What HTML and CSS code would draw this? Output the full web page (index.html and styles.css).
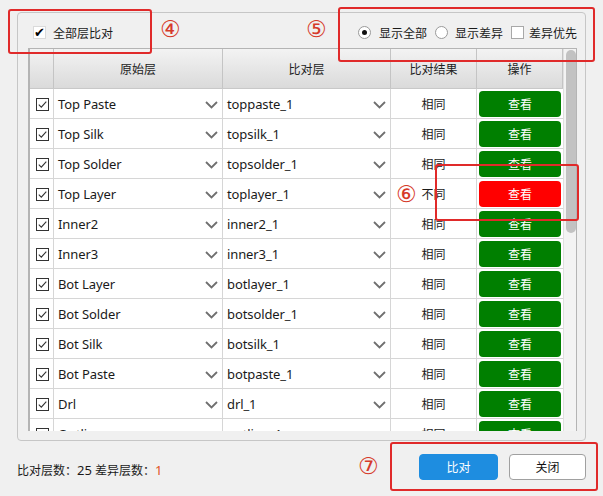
FILE: index.html
```html
<!DOCTYPE html>
<html>
<head>
<meta charset="utf-8">
<link rel="stylesheet" href="styles.css">
</head>
<body>
<div class="window">
  <div class="group">
    <div class="toolbar">
      <label class="chk-all"><span class="bigcheck">✔</span>全部层比对</label>
      <div class="filters">
        <span class="radio on"></span><span class="opt">显示全部</span>
        <span class="radio r2"></span><span class="opt o2">显示差异</span>
        <span class="box"></span><span class="opt">差异优先</span>
      </div>
    </div>
    <div class="table">
      <div class="grid">
        <div class="row head">
          <div class="c c0"></div>
          <div class="c c1">原始层</div>
          <div class="c c2">比对层</div>
          <div class="c c3">比对结果</div>
          <div class="c c4">操作</div>
        </div>
        <div class="rows" id="rows"></div>
      </div>
      <div class="scroll"><div class="thumb"></div></div>
    </div>
  </div>
  <div class="footer">
    <div class="stats">比对层数：<span class="lat">25</span> 差异层数：<span class="diff lat">1</span></div>
    <div class="actions">
      <button class="btn primary">比对</button>
      <button class="btn plain">关闭</button>
    </div>
  </div>

  <div class="mark m4"></div><span class="num n4">④</span>
  <div class="mark m5"></div><span class="num n5">⑤</span>
  <div class="mark m6"></div><span class="num n6">⑥</span>
  <div class="mark m7"></div><span class="num n7">⑦</span>
</div>
<script src="script.js"></script>
</body>
</html>
```
FILE: script.js
```js
const data = [
  ["Top Paste","toppaste_1",1],["Top Silk","topsilk_1",1],["Top Solder","topsolder_1",1],
  ["Top Layer","toplayer_1",0],["Inner2","inner2_1",1],["Inner3","inner3_1",1],
  ["Bot Layer","botlayer_1",1],["Bot Solder","botsolder_1",1],["Bot Silk","botsilk_1",1],
  ["Bot Paste","botpaste_1",1],["Drl","drl_1",1],["Outline","outline_1",1]
];
const chev = '<svg class="chev" width="13" height="8" viewBox="0 0 13 8"><path d="M1 1 L6.5 6.5 L12 1" fill="none" stroke="#6f6f6f" stroke-width="1.8"/></svg>';
const chk = '<svg class="rchk" width="13" height="13" viewBox="0 0 13 13"><rect x="0.5" y="0.5" width="12" height="12" fill="#fff" stroke="#333"/><path d="M2.8 6.6 L5.3 9.1 L10.3 3.6" fill="none" stroke="#333" stroke-width="1.1"/></svg>';
document.getElementById('rows').innerHTML = data.map(d =>
  `<div class="row">
    <div class="c c0">${chk}</div>
    <div class="c c1"><span>${d[0]}</span>${chev}</div>
    <div class="c c2"><span>${d[1]}</span>${chev}</div>
    <div class="c c3">${d[2] ? '相同' : '不同'}</div>
    <div class="c c4"><button class="view ${d[2] ? '' : 'bad'}">查看</button></div>
  </div>`).join('');
```
FILE: styles.css
```css
* { box-sizing: border-box; }
html, body { margin: 0; padding: 0; }
body {
  width: 603px; height: 496px; overflow: hidden;
  background: #f0f0f0;
  font-family: "Noto Sans", "Noto Sans CJK SC", sans-serif;
  font-size: 12px; color: #1a1a1a;
}
.window { position: relative; width: 603px; height: 496px; padding: 12px 17px 0 17px; }
.group {
  width: 569px; height: 429px;
  border: 1px solid #c6c6c6; border-radius: 4px;
  padding: 0 8px 0 10px;
}
.toolbar { height: 35px; display: flex; align-items: center; justify-content: space-between; padding-top: 4px; }
.chk-all { display: flex; align-items: center; gap: 7px; padding-left: 5px; }
.bigcheck {
  width: 13px; height: 13px; border: 1px solid #dadada; background: #fff;
  display: flex; align-items: center; justify-content: center;
  font-size: 13px; line-height: 1; color: #000; font-family: "DejaVu Sans", sans-serif; font-weight: bold;
}
.filters { display: flex; align-items: center; }
.radio {
  width: 13px; height: 13px; border-radius: 50%; border: 1px solid #9a9a9a; background: #fff;
  display: inline-flex; align-items: center; justify-content: center; margin-right: 8px;
}
.radio.r2 { margin-right: 7px; }
.radio.on::after { content: ""; width: 5px; height: 5px; border-radius: 50%; background: #111; }
.box { width: 13px; height: 13px; border: 1px solid #a8a8a8; background: #fff; margin-right: 5px; }
.opt { margin-right: 8px; }
.opt:last-child { margin-right: 0; }

.table { display: flex; width: 549px; height: 383px; border: 1px solid #b4b4b4; border-left-width: 2px; border-bottom: none; background: #fff; overflow: hidden; }
.grid { width: 533px; }
.row { display: grid; grid-template-columns: 24px 169px 168px 86px 86px; height: 30px; border-bottom: 1px solid #d6d6d6; }
.c { border-right: 1px solid #d6d6d6; display: flex; align-items: center; }
.c4 { border-right: none; }
.head { height: 40px; background: linear-gradient(#f3f3f3, #dadada); border-bottom: 1px solid #c8c8c8; }
.head .c { justify-content: center; border-right-color: #c4c4c4; color: #222; }
.head .c4 { border-right: 1px solid #c4c4c4; }
.c0 { justify-content: center; padding-left: 1px; }
.c1, .c2 { justify-content: space-between; padding: 0 4px 0 4px; }
.c1 span, .c2 span { font-size: 13px; letter-spacing: -0.1px; }
.chev { margin-top: 1px; }
.c3 { justify-content: center; }
.c4 { padding: 2px; }
.view {
  width: 100%; height: 26px; border: none; border-radius: 4px;
  background: #007f00; color: #fff; font: inherit; padding: 0;
}
.view.bad { background: #ff0000; }
.scroll { width: 14px; background: #f3f3f3; border-left: 1px solid #e0e0e0; padding: 1px 2px 0 2px; }
.thumb { width: 10px; height: 183px; background: #c2c2c2; border-radius: 5px; }

.footer { display: flex; justify-content: space-between; align-items: center; height: 52px; padding-top: 0; }
.stats { padding-top: 5px; }
.lat { font-size: 13px; }
.diff { color: #e2531e; }
.actions { display: flex; gap: 11px; }
.btn { width: 79px; height: 26px; border-radius: 4px; font: inherit; padding: 0; }
.btn.primary { background: #1e8de0; color: #fff; border: 1px solid #1e8de0; }
.btn.plain { background: #fff; color: #111; border: 1px solid #a0a0a0; width: 77px; }

.mark { position: absolute; border: 2.5px solid #e02a2a; border-radius: 3px; }
.m4 { left: 8px; top: 9px; width: 144px; height: 45px; }
.m5 { left: 338px; top: 7px; width: 257px; height: 55px; }
.m6 { left: 435px; top: 164px; width: 144px; height: 57px; }
.m7 { left: 390px; top: 442px; width: 208px; height: 49px; }
.num { position: absolute; color: #d63a2a; font-family: "DejaVu Sans", sans-serif; font-size: 23px; line-height: 23px; }
.n4 { left: 160px; top: 18px; }
.n5 { left: 306px; top: 18px; }
.n6 { left: 396px; top: 183px; }
.n7 { left: 358px; top: 455px; }
```
